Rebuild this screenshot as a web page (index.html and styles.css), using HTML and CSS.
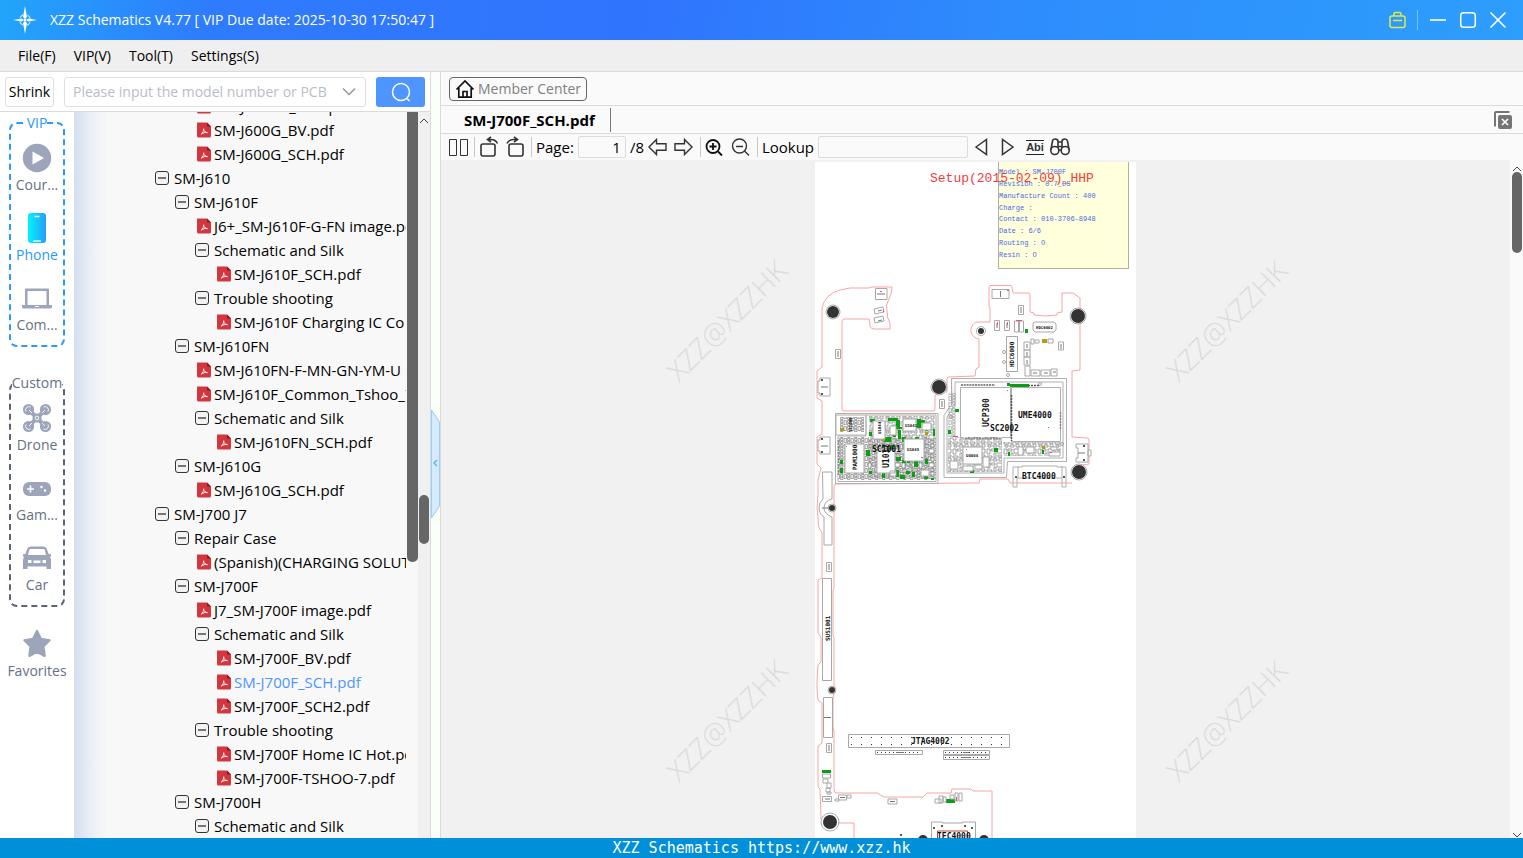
FILE: index.html
```html
<!DOCTYPE html>
<html lang="en">
<head>
<meta charset="utf-8">
<title>XZZ Schematics</title>
<link rel="stylesheet" href="styles.css">
</head>
<body>
<svg width="0" height="0" class="defs" aria-hidden="true">
  <symbol id="i-pdf" viewBox="0 0 20 16"><path d="M3 .5h10l4 4V14a1.500 1.500 0 0 1-1.500 1.500h-11A1.500 1.500 0 0 1 3 14z" fill="#d2363f"/><path d="M13 .5l4 4h-4z" fill="#8f1820"/><path d="M7 12.300c1.700-1.200 2.900-3.500 2.800-5.800M9.700 7.500c.3 1.700 1.700 3 3.800 3.200M7.500 11.800c1.700-.9 3.300-1.600 5.800-1.200" fill="none" stroke="#fff" stroke-width=".9"/></symbol>
  <symbol id="i-minus" viewBox="0 0 20 16"><rect x="1.500" y="1.500" width="13" height="13" rx="2.500" fill="#f2f2f2" stroke="#333"/><path d="M4 8h8" stroke="#222" stroke-width="1.200"/></symbol>
</svg>

<header class="titlebar">
  <svg class="logo" viewBox="0 0 26 30" aria-hidden="true"><path d="M13 1l2 11-2 2-2-2zM13 29l2-11-2-2-2 2z" fill="#fff"/><path d="M1 15l9-1.500 1.500 1.500L10 16.500zM25 15l-9-1.500-1.500 1.500 1.500 1.500z" fill="#fff"/><circle cx="13" cy="15" r="5.500" fill="none" stroke="#b8e4ff" stroke-width="1.200" stroke-dasharray="5 3.640" stroke-dashoffset="-2"/><circle cx="13" cy="15" r="1.500" fill="#fff"/></svg>
  <h1 class="title">XZZ Schematics V4.77 [ VIP Due date: 2025-10-30 17:50:47 ]</h1>
  <button class="win-btn" aria-label="Toolbox"><svg viewBox="0 0 18 18"><g fill="none" stroke="#dfe94a" stroke-width="1.500"><rect x="2" y="5" width="15" height="11.500" rx="2"/><path d="M6 5V3q0-1.500 1.500-1.500h4q1.500 0 1.500 1.500v2M5 9.500h9"/></g></svg></button>
  <span class="win-sep"></span>
  <button class="win-btn" aria-label="Minimize"><svg viewBox="0 0 18 18"><path d="M1 9h16" stroke="#fff" stroke-width="1.600"/></svg></button>
  <button class="win-btn" aria-label="Maximize"><svg viewBox="0 0 18 18"><rect x="1.700" y="1.700" width="14.600" height="14.600" rx="3" fill="none" stroke="#fff" stroke-width="1.500"/></svg></button>
  <button class="win-btn" aria-label="Close"><svg viewBox="0 0 18 18"><path d="M1.500 1.500l15 15M16.500 1.500l-15 15" stroke="#fff" stroke-width="1.600"/></svg></button>
</header>

<nav class="menubar">
  <button class="menu">File(F)</button>
  <button class="menu">VIP(V)</button>
  <button class="menu">Tool(T)</button>
  <button class="menu">Settings(S)</button>
</nav>

<main class="workspace">
  <section class="browser">
    <form class="search">
      <button type="button" class="shrink">Shrink</button>
      <label class="combo">
        <input type="text" aria-label="Model number" placeholder="Please input the model number or PCB">
        <svg viewBox="0 0 14 10" aria-hidden="true"><path d="M1 1.500l6 6 6-6" fill="none" stroke="#8d96a3" stroke-width="1.500"/></svg>
      </label>
      <button type="button" class="go" aria-label="Search"><svg viewBox="0 0 22 22"><circle cx="11" cy="11" r="8.500" fill="none" stroke="#fff" stroke-width="1.500"/><path d="M16.500 17l3 3" stroke="#fff" stroke-width="1.500"/></svg></button>
    </form>

    <div class="browser-body">
      <nav class="sidebar">
        <fieldset class="group vip">
          <legend>VIP</legend>
          <button class="cat"><svg viewBox="0 0 30 30"><circle cx="15" cy="15" r="14.200"/><path d="M10.500 8.500v13l11.500-6.500z" class="cut"/></svg>Cour...</button>
          <button class="cat active"><svg viewBox="0 0 30 30"><defs><linearGradient id="ph"><stop offset="0" stop-color="#00f4fb"/><stop offset="1" stop-color="#2a9cfa"/></linearGradient></defs><rect x="6" y="0" width="18" height="30" rx="3" fill="url(#ph)"/><path d="M12.500 3.500h5M11 28h8" stroke="#d5f4ff" stroke-width="1.300"/></svg>Phone</button>
          <button class="cat"><svg viewBox="0 0 30 30"><path d="M4 5.500h22q1 0 1 1V22h3v2q0 1.500-1.500 1.500h-27Q0 25.500 0 24v-2h3V6.500q0-1 1-1zM5.500 8v14h19V8z" fill-rule="evenodd"/><path d="M13 23.500h4" stroke="#fff"/></svg>Com...</button>
        </fieldset>
        <fieldset class="group custom">
          <legend>Custom</legend>
          <button class="cat"><svg viewBox="0 0 30 30"><path d="M7 7l16 16M23 7L7 23" class="arm"/><circle cx="15" cy="15" r="4.500"/><circle cx="6.500" cy="6.500" r="5.600"/><circle cx="23.500" cy="6.500" r="5.600"/><circle cx="6.500" cy="23.500" r="5.600"/><circle cx="23.500" cy="23.500" r="5.600"/><g fill="none" stroke="#fff" stroke-width=".9"><circle cx="15" cy="15" r="1.800"/><path d="M4 8.500a3.300 3.300 0 0 1 4.500-4.500M21.500 4a3.300 3.300 0 0 1 4.500 4.500M4 21.500a3.300 3.300 0 0 0 4.500 4.500M21.500 26a3.300 3.300 0 0 0 4.500-4.500M7 7l3 3M23 7l-3 3M7 23l3-3M23 23l-3-3"/></g></svg>Drone</button>
          <button class="cat"><svg viewBox="0 0 30 30"><rect x="1" y="9" width="28" height="14" rx="6"/><path d="M5 16h7M8.500 12.500v7" stroke="#fff" stroke-width="1.600"/><circle cx="19.500" cy="14" r="1.200" class="cut"/><circle cx="23" cy="17.500" r="1.200" class="cut"/></svg>Gam...</button>
          <button class="cat"><svg viewBox="0 0 30 30"><path d="M9 3.500h12q3 0 4 3l1.600 4.500 2.400.2v2.300l-1.200.5q1.200 1 1.200 3V26h-4.500v-2.500h-19V26H1v-9q0-2 1.200-3L1 13.500v-2.300l2.400-.2L5 6.500q1-3 4-3zM8.500 6q-1 0-1.300 1L6 12h18l-1.200-5q-.3-1-1.300-1zM6 17v3h3.500v-3zM20.500 17v3H24v-3zM11.500 17.500V20h7v-2.500z" fill-rule="evenodd"/></svg>Car</button>
        </fieldset>
        <button class="cat favorites"><svg viewBox="0 0 30 30"><path d="M15 1.800l4 8 8.700 1.400-6.200 6.300 1.300 8.900q.2 1-.8.6L15 23l-7 4q-1 .4-.8-.6l1.300-8.900L2.300 11.200 11 9.800z" stroke="#9ca5b9" stroke-width="2" stroke-linejoin="round"/></svg>Favorites</button>
      </nav>

      <div class="tree-wrap">
        <ul class="tree">
          <li class="l3"><a href="#"><svg><use href="#i-pdf"/></svg>SM-J600FN_SCH.pdf</a></li>
          <li class="l3"><a href="#"><svg><use href="#i-pdf"/></svg>SM-J600G_BV.pdf</a></li>
          <li class="l3"><a href="#"><svg><use href="#i-pdf"/></svg>SM-J600G_SCH.pdf</a></li>
          <li class="l1"><button><svg><use href="#i-minus"/></svg>SM-J610</button></li>
          <li class="l2"><button><svg><use href="#i-minus"/></svg>SM-J610F</button></li>
          <li class="l3"><a href="#"><svg><use href="#i-pdf"/></svg>J6+_SM-J610F-G-FN image.pdf</a></li>
          <li class="l3"><button><svg><use href="#i-minus"/></svg>Schematic and Silk</button></li>
          <li class="l4"><a href="#"><svg><use href="#i-pdf"/></svg>SM-J610F_SCH.pdf</a></li>
          <li class="l3"><button><svg><use href="#i-minus"/></svg>Trouble shooting</button></li>
          <li class="l4"><a href="#"><svg><use href="#i-pdf"/></svg>SM-J610F Charging IC Co</a></li>
          <li class="l2"><button><svg><use href="#i-minus"/></svg>SM-J610FN</button></li>
          <li class="l3"><a href="#"><svg><use href="#i-pdf"/></svg>SM-J610FN-F-MN-GN-YM-U</a></li>
          <li class="l3"><a href="#"><svg><use href="#i-pdf"/></svg>SM-J610F_Common_Tshoo_7</a></li>
          <li class="l3"><button><svg><use href="#i-minus"/></svg>Schematic and Silk</button></li>
          <li class="l4"><a href="#"><svg><use href="#i-pdf"/></svg>SM-J610FN_SCH.pdf</a></li>
          <li class="l2"><button><svg><use href="#i-minus"/></svg>SM-J610G</button></li>
          <li class="l3"><a href="#"><svg><use href="#i-pdf"/></svg>SM-J610G_SCH.pdf</a></li>
          <li class="l1"><button><svg><use href="#i-minus"/></svg>SM-J700 J7</button></li>
          <li class="l2"><button><svg><use href="#i-minus"/></svg>Repair Case</button></li>
          <li class="l3"><a href="#"><svg><use href="#i-pdf"/></svg>(Spanish)(CHARGING SOLUTION</a></li>
          <li class="l2"><button><svg><use href="#i-minus"/></svg>SM-J700F</button></li>
          <li class="l3"><a href="#"><svg><use href="#i-pdf"/></svg>J7_SM-J700F image.pdf</a></li>
          <li class="l3"><button><svg><use href="#i-minus"/></svg>Schematic and Silk</button></li>
          <li class="l4"><a href="#"><svg><use href="#i-pdf"/></svg>SM-J700F_BV.pdf</a></li>
          <li class="l4"><a href="#" class="current"><svg><use href="#i-pdf"/></svg>SM-J700F_SCH.pdf</a></li>
          <li class="l4"><a href="#"><svg><use href="#i-pdf"/></svg>SM-J700F_SCH2.pdf</a></li>
          <li class="l3"><button><svg><use href="#i-minus"/></svg>Trouble shooting</button></li>
          <li class="l4"><a href="#"><svg><use href="#i-pdf"/></svg>SM-J700F Home IC Hot.pdf</a></li>
          <li class="l4"><a href="#"><svg><use href="#i-pdf"/></svg>SM-J700F-TSHOO-7.pdf</a></li>
          <li class="l2"><button><svg><use href="#i-minus"/></svg>SM-J700H</button></li>
          <li class="l3"><button><svg><use href="#i-minus"/></svg>Schematic and Silk</button></li>
        </ul>
      </div>
      <div class="inner-bar"><div class="inner-thumb"></div></div>
      <div class="outer-bar">
        <svg class="chev" viewBox="0 0 10 6"><path d="M1 5l4-4 4 4" fill="none" stroke="#444"/></svg>
        <div class="outer-thumb"></div>
      </div>
    </div>
  </section>

  <div class="splitter">
    <button class="handle" aria-label="Collapse panel"><svg viewBox="0 0 10 110"><path d="M.5 1l8 12v84l-8 12z" fill="#d6eaff" stroke="#9ccdf5"/><path d="M6 51l-3 3 3 3" fill="none" stroke="#5fb0ee" stroke-width="1.400"/></svg></button>
  </div>

  <section class="document">
    <div class="member-row">
      <button class="member"><svg viewBox="0 0 20 20" aria-hidden="true"><path d="M1.500 10.500L10 2l8.500 8.500M3.800 9v9.200h12.400V9M8 18v-5.500h4V18" fill="none" stroke="#111" stroke-width="1.700"/></svg>Member Center</button>
    </div>
    <div class="tabs">
      <button class="tab">SM-J700F_SCH.pdf</button>
      <button class="close-all" aria-label="Close all tabs"><svg viewBox="0 0 18 18"><path d="M1 15.500V2q0-1 1-1h13.500" fill="none" stroke="#757575" stroke-width="2"/><rect x="4" y="4" width="14" height="14" rx="2" fill="#757575"/><path d="M8 8l6 6M14 8l-6 6" stroke="#fff" stroke-width="1.700"/></svg></button>
    </div>
    <div class="toolbar">
      <button class="tool" aria-label="Two pages"><svg viewBox="0 0 22 22"><path d="M1.500 3.500h7v16h-7zM12.500 3.500h7v16h-7z" fill="none" stroke="#333"/></svg></button>
      <span class="sep"></span>
      <button class="tool" aria-label="Rotate left"><svg viewBox="0 0 22 22"><g fill="none" stroke="#333" stroke-width="1.600"><rect x="2" y="8" width="14" height="12" rx="2"/><path d="M18.500 7.500q-2-4-6.500-4H9M12 .8L8.500 3.500 12 6"/></g></svg></button>
      <button class="tool" aria-label="Rotate right"><svg viewBox="0 0 22 22"><g fill="none" stroke="#333" stroke-width="1.600"><rect x="4" y="8" width="14" height="12" rx="2"/><path d="M2 7.500q2-4 6.500-4h3M9 .8l3.500 2.700L9 6"/></g></svg></button>
      <span class="sep"></span>
      <label for="page">Page:</label>
      <input id="page" class="page-no" type="text" value="1">
      <span class="total">/8</span>
      <button class="tool" aria-label="Previous page"><svg viewBox="0 0 22 22"><path d="M1 11l7.500-7.500v4.300H18v6.400H8.500v4.300z" fill="none" stroke="#333" stroke-width="1.400"/></svg></button>
      <button class="tool" aria-label="Next page"><svg viewBox="0 0 22 22"><path d="M18 11l-7.500-7.500v4.300H1v6.400h9.500v4.300z" fill="none" stroke="#333" stroke-width="1.400"/></svg></button>
      <span class="sep"></span>
      <button class="tool" aria-label="Zoom in"><svg viewBox="0 0 22 22"><g fill="none" stroke="#111" stroke-width="1.800"><circle cx="8" cy="10.500" r="6.500"/><path d="M13 15.500l4 4M4.500 10.500h7M8 7v7"/></g></svg></button>
      <button class="tool" aria-label="Zoom out"><svg viewBox="0 0 22 22"><g fill="none" stroke="#333" stroke-width="1.400"><circle cx="8.500" cy="10" r="7"/><path d="M13.500 15l4.500 4.500M5 10.500h7"/></g></svg></button>
      <span class="sep"></span>
      <label for="lookup">Lookup</label>
      <input id="lookup" class="lookup" type="text">
      <button class="tool" aria-label="Find previous"><svg viewBox="0 0 22 22"><path d="M4 11l10.500-7.500v15z" fill="none" stroke="#333" stroke-width="1.500"/></svg></button>
      <button class="tool" aria-label="Find next"><svg viewBox="0 0 22 22"><path d="M15 11L4.500 3.500v15z" fill="none" stroke="#333" stroke-width="1.500"/></svg></button>
      <button class="tool abi">Abi</button>
      <button class="tool" aria-label="Find"><svg viewBox="0 0 22 22"><g fill="none" stroke="#333" stroke-width="1.600"><circle cx="4.800" cy="14.500" r="4"/><circle cx="15.200" cy="14.500" r="4"/><path d="M1 13.500L2.500 5q.4-2 2.500-2 3 0 3 2.500v6.500M19 13.500L17.500 5Q17 3 15 3q-3 0-3 2.500v6.500M8 6h4M8 10.500h4M8.500 14h3"/></g></svg></button>
    </div>
    <div class="viewer">
      <div class="canvas">
        <svg class="marks" aria-hidden="true"><g>
          <text transform="translate(238 223) rotate(-45)">XZZ@XZZHK</text>
          <text transform="translate(738 223) rotate(-45)">XZZ@XZZHK</text>
          <text transform="translate(238 623) rotate(-45)">XZZ@XZZHK</text>
          <text transform="translate(738 623) rotate(-45)">XZZ@XZZHK</text>
        </g></svg>
        <svg class="sheet" viewBox="815 162 321 676" preserveAspectRatio="xMidYMin slice">
          <defs>
            <pattern id="cells" width="7" height="6" patternUnits="userSpaceOnUse"><path d="M.5.5h2.500v2H.500zM4 .5h2.500v4H4zM.5 3.500h2.500v2H.500z" fill="#eee" stroke="#777" stroke-width=".6"/></pattern>
            <pattern id="mix" width="17" height="14" patternUnits="userSpaceOnUse"><path d="M1 1h3v5H1zM5 1h4v2H5zM11 1h5v4h-5zM1 8h5v2H1zM8 5h2v5H8zM12 7h4v2h-4zM2 11h3v2H2zM7 11h4v2H7zM13 10h3v3h-3z" fill="#fff" stroke="#777" stroke-width=".7"/></pattern>
            <pattern id="pins" width="10" height="7" x="850" y="736" patternUnits="userSpaceOnUse"><path d="M1 1h1v1H1z" fill="#333"/></pattern>
          </defs>
          <rect x="815" y="162" width="321" height="676" fill="#fff"/>
          <rect x="998.500" y="161" width="130" height="107.500" fill="#ffffdc" stroke="#b3b39c"/>
          <g class="note">
            <text x="999" y="174">Model : SM-J700F</text>
            <text x="999" y="186">Revision : 0.7_DS</text>
            <text x="999" y="198">Manufacture Count : 400</text>
            <text x="999" y="210">Charge :</text>
            <text x="999" y="221">Contact : 010-3706-8948</text>
            <text x="999" y="233">Date : 6/6</text>
            <text x="999" y="245">Routing : O</text>
            <text x="999" y="257">Resin : O</text>
          </g>
          <text class="setup" x="930" y="182">Setup(2015-02-09)_HHP</text>

          <!-- board outline -->
          <path class="edge" d="M872 287H892Q892 293 889 299Q885 305 887 311Q887 319 890 323V329H874Q869 328 870 324L869 319H844Q842 319 842 322V408Q842 411 844 411H933Q935 411 935 408V395M946 393Q947 393 947 391V379Q947 377 949 377L975 376L976 369L979 367V339Q973 338 971 332Q970 326 976 322H990V308L989 306V287Q989 285 991 285.500H1011Q1012 286 1013 293H1028Q1030 293 1030 295V312L1034 313V315Q1045 317 1057 315V313L1062 312V293H1073L1080 298V370L1072 371V437L1087 438Q1089 438 1089 440V464L1083 465M1072 483H1010L1008 479H980L979 483L836 484Q834 484 834 487V587L833 591V635L834 638V693L833 698V728L834 731V790Q834 793 837 793H877L884 797H923L927 793H951L952 789H971L973 791H992V838"/>
          <path class="edge" d="M872 287L869 288H850L840 290Q825 294 822 308V367L817 371V398L822 401V434L817 437V464L821 468L818 480V495Q816 508 818 518Q818 530 822 532V578L818 580V633L821 637V662L818 665Q816 687 818 700L822 703V743L818 746V787L820 789L821 819M838 823H854V838"/>

          <!-- shield frames -->
          <g class="part">
            <path d="M835.500 413.500h102.500v70h-102.500zM838 436h28v-21h70v66.500h-98zM836 415h30v20h-30z"/>
            <path d="M951.500 378.500h115v83h-59l-1 16h-62.500v-62l8-12zM955 382h108v76h-59v15h-57v-56l8-12zM951.500 403v-24"/>
            <path d="M960.500 387.500h50v50h-50zM1011.500 387.500h49v54h-49z"/>
            <path d="M1013 487v-20h9v-1h35v1h9v20h-4v-9h-45v9zM1018 478v-12M1062 478v-12"/>
          </g>
          <rect x="838" y="437" width="98" height="43" fill="url(#cells)"/>
          <rect x="869" y="416" width="66" height="62" fill="url(#mix)"/>
          <rect x="840" y="417" width="24" height="15" fill="url(#cells)"/>
          <rect x="948" y="437" width="54" height="35" fill="url(#mix)"/>
          <rect x="948" y="393" width="8" height="44" fill="url(#cells)" opacity=".7"/>
          <rect x="1003" y="442" width="58" height="14" fill="url(#mix)"/>
          <path d="M961 385h34M965 438.500h36" stroke="#888" stroke-width="2" stroke-dasharray="2 .8" fill="none"/>
          <path d="M1011.500 395v46M1010 385.500h30" stroke="#555" stroke-width="1.500" stroke-dasharray="2 1" fill="none"/>
          <path d="M1060.500 412v17M838.500 440v36" stroke="#888" stroke-width="1.500" stroke-dasharray="2 1"/>

          <g class="green">
            <path d="M870 419h5v3h-5zM888 418h10v3h-10zM896 420h4v8h-4zM917 419h4v9h-4zM921 420h4v3h-4zM925 427h3v4h-3zM933 429h2v7h-2zM873 426h3v8h-3zM892 427h10v2h-10zM898 430h3v9h-3zM884 437h7v5h-7zM893 432h3v5h-3zM866 450h4v6h-4zM890 445h4v5h-4zM896 457h5v4h-5zM902 437h4v5h-4zM915 437h4v3h-4zM907 455h3v8h-3zM914 461h4v6h-4zM925 459h3v5h-3zM902 460h4v3h-4zM896 470h3v7h-3zM900 475h5v4h-5zM882 471h3v7h-3zM906 471h4v3h-4zM912 472h3v5h-3zM924 476h4v3h-4zM931 478h3v2h-3zM869 471h3v3h-3zM869 432h3v4h-3z"/>
            <path d="M1010 384h19v3h-19zM1007 383h3v3h-3zM955 409h4v3h-4zM948 430h3v4h-3zM994 448h4v4h-4zM1008 452h2v4h-2zM1042 450h2v4h-2zM970 470h4v3h-4zM1025 329h3v4h-3zM1016 321h2v5h-2zM822 770h9v3h-9zM946 799h9v4h-9zM840 460h3v4h-3zM840 468h3v5h-3z"/>
          </g>
          <path d="M882 438h3v3h-3zM925 432h3v3h-3zM840 428h4v3h-4zM1042 339h5v4h-5zM1042 446h3v3h-3zM1017 328h4v3h-4z" fill="#b59b12"/>

          <!-- integrated circuits -->
          <g class="chip">
            <path d="M845 444h19v29h-19zM877 450h18v23h-18zM904 439h20v22h-20zM873 421h12v18h-12zM903 419h13v12h-13zM890 426h6v9h-6zM922 423h9v7h-9zM921 470h8v6h-8zM890 471h6v5h-6zM963 447h19v17h-19zM983 457h6v10h-6zM950 461h8v8h-8zM963 466h10v5h-10zM975 465h7v4h-7zM1018 447h5v8h-5zM1026 447h8v6h-8zM1049 452h11v4h-11zM1051 447h6v3h-6z"/>
            <path d="M1006.500 336.500h11v35h-11zM1033 323l2-1h19l2 2v6l-2 2h-19l-2-2zM992 289.500h17v9h-17zM875.500 288.500h11.500v11h-11.500zM1018.500 305.500h5v9h-5zM1058.500 342h5v8h-5zM994.500 320.500h5v10h-5zM1004.500 320.500h5v10h-5zM1014.500 321h4v11h-4zM1019.500 321h4v11h-4zM939.500 399.500h5v9h-5zM835.500 349.500h5v9h-5zM874 309l9-2 1 5-9 2zM874 318l9-2 1 5-9 2z"/>
            <path d="M1024 342h6v8h-6zM1024 350h6v7h-6zM1024 357h6v8h-6zM1025 366h5v10h-5zM1031 370h9v6h-9zM1041 370h9v6h-9zM1051 369h6v7h-6zM1031 339h3v5h-3zM1035 340h4v3h-4zM1048 339h5v4h-5z"/>
            <path d="M820 378h10v18h-10v-3h-2v-12h2zM820 437h10v17h-10v-3h-2v-11h2zM1076 444h12v18h-12v-4h2v-10h-2zM1088 450h3v6h-3z"/>
            <path d="M822.500 472h9.500v27q-8 2-8 9 0 6 8 9v28h-8v-28q-5-3-5-9t4-9zM822.500 578.500h9v102h-9zM823.500 697.500h9v40h-9zM826.500 562.500h5v9h-5zM826.500 743.500h5v9h-5z"/>
            <path d="M848.500 734.500h161v13h-161zM875.500 750.500h47v4h-47zM943.500 750.500h46v4h-46zM943.500 755.500h46v4h-46z"/>
            <path d="M822.500 774h8v4h-8zM823 779h5v4h-5zM827 783h4v5h-4zM826 788h4v4h-4zM822.500 796.500h9v5h-9zM835 799h4v2h-4zM838.500 795h8v5h-8zM847 795h4v3h-4zM888 799h9v5h-9zM935 799h6v4h-6zM939 796h4v7h-4zM943 797h3v5h-3zM950 795h4v4h-4zM955 793h3v8h-3zM959 793h3v8h-3zM827 792h4v2h-4z"/>
            <path d="M931.500 838v-16h11v1h20v-1h13v16"/>
          </g>
          <path d="M937.500 838v-7h30v7" fill="#fff" stroke="#b44"/>
          <rect x="850" y="736" width="158" height="11" fill="url(#pins)"/>
          <path d="M877 752.500h44M945 752.500h43M945 757.500h43" stroke="#333" stroke-dasharray="1 3"/>
          <path d="M896 752.500h8M963 752.500h6M961 757.500h10M877 294h8M824 717.500h7M822 508h10M878 311l4-1M878 321l4-1M1000.500 291v6M838 351v6M829 564v6M829 745v6M1021 307v6M1061 344v5M997 323v5M1007 323v5M821 387h7M821 446h7M1078 453h7M942 401v6M825 799h5M890 801.500h5M840 797.500h5M1027 344v4M1027 352v4M1027 360v4M1033 373h4M1044 373h4M1053 372h3M880 324" class="tick"/>
          <path d="M880 291h2v1h-2zM883 310h1v2h-1zM1007 290h2v1h-2zM1048 427h1v1h-1zM966 449h1v1h-1zM1007 390h1v1h-1zM921 457h2v1h-2zM846 446h1v1h-1zM1016 320h6v1h-6zM997 322h1v3h-1zM1007 322h1v3h-1zM953 436h5v1h-5zM1050 452h2v1h-2zM956 797h1v4h-1z" fill="#f0489b"/>
          <g fill="#222"><circle cx="822" cy="380" r="1"/><circle cx="822" cy="394" r="1"/><circle cx="822" cy="439" r="1"/><circle cx="822" cy="452" r="1"/><circle cx="1084" cy="446" r="1"/><circle cx="1084" cy="460" r="1"/><circle cx="1016" cy="477" r="1"/><circle cx="1064" cy="477" r="1"/><circle cx="901" cy="835" r="1"/><circle cx="934" cy="828" r="1"/><circle cx="942" cy="826" r="1"/><circle cx="965" cy="826" r="1"/><circle cx="972" cy="828" r="1"/></g>
          <g fill="none" stroke="#888" stroke-width=".7"><circle cx="1004" cy="352" r="1.500"/><circle cx="1004" cy="362" r="1.500"/><circle cx="1008" cy="375" r="1.500"/><circle cx="1040" cy="384" r="1.500"/><circle cx="951" cy="417" r="1.500"/><circle cx="1062" cy="444" r="1.500"/></g>

          <!-- mounting holes -->
          <g class="hole">
            <circle cx="833" cy="312" r="6"/><circle cx="939" cy="387" r="7"/><circle cx="1078" cy="316" r="7"/><circle cx="1079" cy="472" r="7"/><circle cx="981" cy="331" r="3"/><circle cx="832" cy="508" r="3"/><circle cx="832" cy="690" r="3"/><circle cx="830" cy="822" r="7"/><circle cx="923" cy="840" r="5"/><circle cx="984" cy="840" r="5"/>
          </g>
          <g class="ring">
            <circle cx="833" cy="312" r="7"/><circle cx="939" cy="387" r="8"/><circle cx="1078" cy="316" r="8"/><circle cx="1079" cy="472" r="8"/><circle cx="981" cy="331" r="4.500"/><circle cx="832" cy="508" r="4"/><circle cx="832" cy="690" r="4"/><circle cx="830" cy="822" r="9"/>
          </g>

          <!-- reference designators -->
          <g class="ref">
            <text x="872" y="452">SC1001</text>
            <text x="990" y="431">SC2002</text>
            <text x="1018" y="418">UME4000</text>
            <text x="1022" y="479">BTC4000</text>
            <text x="911" y="744">JTAG4002</text>
            <text x="937" y="839">IEC4000</text>
            <text transform="translate(989 427) rotate(-90)">UCP300</text>
            <text transform="translate(889 468) rotate(-90)">U1017</text>
          </g>
          <g class="ref small">
            <text transform="translate(857 470) rotate(-90)">PAM1000</text>
            <text transform="translate(1014 367) rotate(-90)">HDC6000</text>
            <text transform="translate(830 641) rotate(-90)">SUS1001</text>
          </g>
          <g class="ref tiny">
            <text x="907" y="451">U1045</text>
            <text x="966" y="457">U4004</text>
            <text x="1036" y="329">HDC6002</text>
            <text x="905" y="427">U1041</text>
            <text transform="translate(881 434) rotate(-90)">U1044</text>
            <text transform="translate(852 432) rotate(-90)">SC1000</text>
          </g>
        </svg>
      </div>
      <div class="view-bar">
        <svg class="chev" viewBox="0 0 10 6"><path d="M1 5l4-4 4 4" fill="none" stroke="#444"/></svg>
        <div class="view-thumb"></div>
        <svg class="chev down" viewBox="0 0 10 6"><path d="M1 1l4 4 4-4" fill="none" stroke="#444"/></svg>
      </div>
    </div>
  </section>
</main>

<footer class="status">XZZ Schematics https://www.xzz.hk</footer>
</body>
</html>
```
FILE: styles.css
```css
* { box-sizing: border-box; }
body {
  margin: 0;
  height: 100vh;
  display: flex;
  flex-direction: column;
  overflow: hidden;
  background: #fafafa;
  color: #000;
  font: 14px/22px "Open Sans", "Noto Sans", sans-serif;
}
button, input { font: inherit; color: inherit; }
button { padding: 0; border: 0; background: none; }
svg { display: block; flex: none; }
.defs { position: absolute; }

.titlebar {
  flex: none;
  display: flex;
  align-items: center;
  gap: 12px;
  height: 40px;
  padding: 0 16px 0 12px;
  background: linear-gradient(100deg, #22a5fb 0, #2f7bfd 14%, #2f74fd 42%, #2e8cfd 66%, #2d9efc 100%);
  color: #fff;
}
.logo { width: 26px; height: 30px; }
.title { flex: 1; margin: 0; font-size: 14px; font-weight: 400; line-height: 22px; }
.win-btn svg { width: 18px; height: 18px; }
.win-sep { width: 1px; height: 20px; margin: 0 -1px; background: #7cc0fd; }

.menubar {
  flex: none;
  display: flex;
  gap: 18px;
  height: 32px;
  padding: 0 18px;
  background: #efefef;
  border-bottom: 1px solid #dadada;
}

.workspace { flex: 1; display: flex; min-height: 0; }
.browser { flex: none; width: 431px; display: flex; flex-direction: column; background: #fff; border-right: 1px solid #dadada; }
.search {
  flex: none;
  display: flex;
  align-items: center;
  gap: 10px;
  height: 40px;
  padding: 0 5px;
  border-bottom: 1px solid #dadada;
}
.shrink { width: 49px; height: 30px; border: 1px solid #dcdfe6; border-radius: 3px; }
.combo { flex: 1; display: flex; align-items: center; height: 30px; padding: 0 9px 0 8px; border: 1px solid #dcdfe6; border-radius: 3px; }
.combo input { flex: 1; min-width: 0; padding: 0; border: 0; outline: 0; background: none; }
.combo input::placeholder { color: #b9bdc6; }
.combo svg { width: 14px; height: 10px; }
.go { display: grid; place-items: center; width: 49px; height: 30px; border-radius: 3px; background: #4f95ff; }
.go svg { width: 22px; height: 22px; }

.browser-body { flex: 1; display: flex; min-height: 0; }
.sidebar { flex: none; width: 74px; overflow: hidden; }
.group { width: 56px; min-width: 0; margin: 0 auto 25px; padding: 9px 0 8px; border: 2px dashed #2b98fb; border-radius: 8px; }
.group legend { margin: 0 auto; padding: 0; line-height: 22px; color: #2b98fb; }
.group.custom { border-color: #5b6378; margin-bottom: 22px; }
.group.custom legend { color: #667085; }
.cat { display: flex; flex-direction: column; align-items: center; width: 100%; line-height: 24px; color: #667085; fill: #9ca5b9; white-space: nowrap; }
.cat + .cat { margin-top: 16px; }
.cat svg { width: 30px; height: 30px; }
.cat .cut { fill: #fff; }
.cat .arm { stroke: #9ca5b9; stroke-width: 4; }
.cat.active { color: #2b98fb; }

.tree-wrap { flex: 1; min-width: 0; overflow: hidden; background: linear-gradient(90deg, #d4dff1 0, #eceff5 18px, #f8f8f8 34px); }
.tree { list-style: none; margin: -18px 1px 0 0; padding: 0; overflow: hidden; }
.tree li { height: 24px; }
.tree a, .tree button { display: flex; align-items: center; height: 24px; color: #000; text-decoration: none; white-space: nowrap; font-size: 15px; }
.tree svg { width: 20px; height: 16px; }
.tree .current { color: #4f95ff; }
.l1 { padding-left: 80px; }
.l2 { padding-left: 100px; }
.l3 { padding-left: 120px; }
.l4 { padding-left: 140px; }

.inner-bar { flex: none; width: 11px; background: #f8f8f8; }
.inner-thumb { height: 62%; border-radius: 0 0 5px 5px; background: #666; }
.outer-bar { flex: none; width: 12px; display: flex; flex-direction: column; align-items: center; background: #f0f0f0; padding-top: 6px; }
.chev { width: 10px; height: 6px; }
.outer-thumb { width: 10px; height: 49px; margin-top: 371px; border-radius: 5px; background: #666; }

.splitter { flex: none; position: relative; width: 10px; background: #fafffa; border-right: 1px solid #dadada; }
.handle { position: absolute; left: 0; top: 44%; width: 10px; height: 110px; }
.handle svg { width: 10px; height: 110px; }

.document { flex: 1; min-width: 0; display: flex; flex-direction: column; background: #fafafa; }
.member-row { flex: none; height: 34px; padding: 5px 8px; border-bottom: 1px solid #dadada; }
.member { display: flex; align-items: center; gap: 3px; height: 24px; padding: 0 5px; border: 1px solid #666; border-radius: 4px; color: #808080; }
.member svg { width: 20px; height: 20px; }
.tabs { flex: none; display: flex; align-items: center; justify-content: space-between; height: 28px; padding: 0 11px 0 8px; border-bottom: 1px solid #dadada; }
.tab { height: 24px; padding: 0 15px; border-right: 1px solid #777; font-size: 15px; font-weight: 700; }
.close-all svg { width: 18px; height: 18px; }
.toolbar { flex: none; display: flex; align-items: center; gap: 4px; height: 26px; padding: 0 7px; font-size: 15px; }
.tool { flex: none; width: 22px; height: 22px; }
.tool svg { width: 22px; height: 22px; }
.sep { width: 1px; height: 20px; background: #c8c8c8; }
.toolbar input { height: 22px; border: 1px solid #dcdcdc; border-radius: 2px; background: #fafafa; padding: 0 4px; }
.page-no { width: 48px; text-align: right; }
.total { width: 14px; }
.lookup { width: 150px; }
.toolbar .abi { width: 18px; height: 15px; margin: 0 2px; border-top: 1px solid #222; border-bottom: 1px solid #222; font: 700 11px/12px "Liberation Sans", sans-serif; color: #333; }

.viewer { flex: 1; min-height: 0; display: flex; background: #f1f1f1; }
.canvas { flex: 1; position: relative; display: flex; justify-content: center; padding-top: 2px; overflow: hidden; }
.marks { position: absolute; left: 0; top: 0; width: 100%; height: 100%; font: 300 28px "Open Sans", sans-serif; fill: #dcdcdc; }
.sheet { position: relative; width: 321px; height: 100%; }
.view-bar { flex: none; width: 13px; display: flex; flex-direction: column; align-items: center; padding-top: 6px; background: #fafafa; }
.view-thumb { width: 10px; height: 81px; border-radius: 5px; background: #666; }
.down { margin-top: auto; }

.note { font: 7px "Liberation Mono", monospace; fill: #4a68e8; }
.setup { font: 13px "Liberation Mono", monospace; fill: #f53b3b; }
.edge { fill: none; stroke: #f8a4a4; stroke-linejoin: round; }
.part { fill: none; stroke: #b0b0b0; }
.chip { fill: #fff; stroke: #a8a8a8; }
.tick { fill: none; stroke: #777; }
.green { fill: #0a9e14; }
.hole { fill: #333; }
.ring { fill: none; stroke: #aaa; }
.ref { font: 700 8px "DejaVu Sans Mono", monospace; fill: #111; }
.small { font-size: 6px; }
.tiny { font-size: 4px; }

.status {
  flex: none;
  height: 20px;
  background: #0090da;
  color: #fff;
  text-align: center;
  font: 15px/20px "DejaVu Sans Mono", monospace;
}
```
